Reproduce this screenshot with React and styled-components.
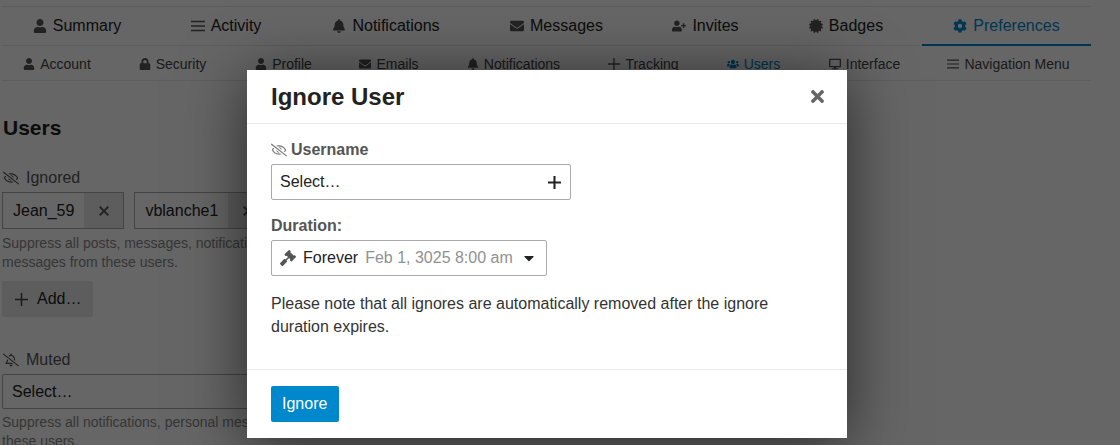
import styled, { createGlobalStyle } from 'styled-components';
import {
  FaUser, FaBell, FaEnvelope, FaUserPlus, FaCertificate, FaCog, FaLock,
  FaUsers, FaDesktop, FaRegEyeSlash, FaRegBellSlash, FaGavel, FaCaretDown, FaTimes,
} from 'react-icons/fa';

const GlobalStyle = createGlobalStyle`
  html, body {
    margin: 0;
    height: 100%;
    overflow: hidden;
    background: #fff;
    font-family: "Liberation Sans", Arial, sans-serif;
    color: #222;
  }
`;

const PlusIcon = () => (
  <svg viewBox="0 0 12 12">
    <path d="M6 0V12M0 6H12" stroke="currentColor" strokeWidth="1.4" fill="none" />
  </svg>
);

const LinesIcon = () => (
  <svg viewBox="0 0 14 12">
    <path d="M0 1.5H14M0 6H14M0 10.5H14" stroke="currentColor" strokeWidth="1.4" fill="none" />
  </svg>
);

const CrossIcon = () => (
  <svg viewBox="0 0 10 10">
    <path d="M0.7 0.7L9.3 9.3M9.3 0.7L0.7 9.3" stroke="currentColor" strokeWidth="1.9" fill="none" />
  </svg>
);

const mainTabs = [
  { label: 'Summary', icon: FaUser, width: 150 },
  { label: 'Activity', icon: LinesIcon, width: 148 },
  { label: 'Notifications', icon: FaBell, width: 172 },
  { label: 'Messages', icon: FaEnvelope, width: 169 },
  { label: 'Invites', icon: FaUserPlus, width: 129 },
  { label: 'Badges', icon: FaCertificate, width: 152 },
  { label: 'Preferences', icon: FaCog, width: 169, active: true },
];

const subTabs = [
  { label: 'Account', icon: FaUser, width: 110 },
  { label: 'Security', icon: FaLock, width: 121 },
  { label: 'Profile', icon: FaUser, width: 101 },
  { label: 'Emails', icon: FaEnvelope, width: 110 },
  { label: 'Notifications', icon: FaBell, width: 139 },
  { label: 'Tracking', icon: PlusIcon, width: 121 },
  { label: 'Users', icon: FaUsers, width: 99, active: true },
  { label: 'Interface', icon: FaDesktop, width: 123 },
  { label: 'Navigation Menu', icon: LinesIcon, width: 165 },
];

export default function App() {
  return (
    <Page>
      <GlobalStyle />
      <Content>
        <MainNav>
          {mainTabs.map(({ label, icon: Icon, width, active }) => (
            <MainTab key={label} $width={width} $active={active}>
              <Icon />
              {label}
            </MainTab>
          ))}
        </MainNav>
        <SubNav>
          {subTabs.map(({ label, icon: Icon, width, active }) => (
            <SubTab key={label} $width={width} $active={active}>
              <Icon />
              {label}
            </SubTab>
          ))}
        </SubNav>

        <Heading>Users</Heading>

        <FieldLabel>
          <FaRegEyeSlash />
          Ignored
        </FieldLabel>
        <ChipRow>
          <Chip>
            <ChipName>Jean_59</ChipName>
            <ChipClose><CrossIcon /></ChipClose>
          </Chip>
          <Chip>
            <ChipName>vblanche1</ChipName>
            <ChipClose><CrossIcon /></ChipClose>
          </Chip>
        </ChipRow>
        <Hint>
          Suppress all posts, messages, notifications, personal<br />
          messages from these users.
        </Hint>
        <AddButton>
          <PlusIcon />
          Add…
        </AddButton>

        <MutedLabel>
          <FaRegBellSlash />
          Muted
        </MutedLabel>
        <WideSelect>Select…</WideSelect>
        <MutedHint>
          Suppress all notifications, personal messages from<br />
          these users.
        </MutedHint>
      </Content>

      <Overlay />
      <Modal>
        <ModalHeader>
          <ModalTitle>Ignore User</ModalTitle>
          <CloseButton><FaTimes /></CloseButton>
        </ModalHeader>
        <ModalBody>
          <ModalLabel>
            <FaRegEyeSlash />
            Username
          </ModalLabel>
          <UserSelect>
            Select…
            <PlusIcon />
          </UserSelect>
          <ModalLabel>Duration:</ModalLabel>
          <DurationSelect>
            <FaGavel />
            <DurationName>Forever</DurationName>
            <DurationDate>Feb 1, 3025 8:00 am</DurationDate>
            <FaCaretDown />
          </DurationSelect>
          <Note>Please note that all ignores are automatically removed after the ignore duration expires.</Note>
        </ModalBody>
        <ModalFooter>
          <PrimaryButton>Ignore</PrimaryButton>
        </ModalFooter>
      </Modal>
    </Page>
  );
}

const Page = styled.div`
  position: relative;
  width: 1120px;
  height: 445px;
  overflow: hidden;
`;

const Content = styled.div`
  width: 1089px;
  margin-left: 2px;
  padding-top: 6px;
`;

const MainNav = styled.nav`
  display: flex;
  height: 38px;
  border-top: 1px solid #e9e9e9;
  border-bottom: 1px solid #e9e9e9;
`;

const MainTab = styled.a`
  flex: 0 0 ${p => p.$width}px;
  display: flex;
  align-items: center;
  justify-content: center;
  gap: 6px;
  font-size: 16px;
  color: ${p => (p.$active ? '#08c' : '#222')};
  border-bottom: 2px solid ${p => (p.$active ? '#08c' : 'transparent')};
  margin-bottom: -1px;

  svg {
    width: 14px;
    height: 14px;
    color: ${p => (p.$active ? '#08c' : '#555')};
  }
`;

const SubNav = styled.nav`
  display: flex;
  height: 34px;
  border-bottom: 1px solid #e9e9e9;
`;

const SubTab = styled.a`
  flex: 0 0 ${p => p.$width}px;
  display: flex;
  align-items: center;
  justify-content: center;
  gap: 5px;
  padding-top: 1px;
  font-size: 14px;
  color: ${p => (p.$active ? '#08c' : '#444')};

  svg {
    width: 12px;
    height: 12px;
    color: ${p => (p.$active ? '#08c' : '#555')};
  }
`;

const Heading = styled.h2`
  margin: 35px 0 0 1px;
  font-size: 21px;
  line-height: 24px;
  font-weight: 700;
  color: #222;
`;

const FieldLabel = styled.div`
  display: flex;
  align-items: center;
  gap: 7px;
  margin: 29px 0 0 1px;
  font-size: 16px;
  line-height: 18px;
  color: #555;

  svg {
    width: 16px;
    height: 14px;
  }
`;

const MutedLabel = styled(FieldLabel)`
  margin-top: 34px;
`;

const ChipRow = styled.div`
  display: flex;
  gap: 10px;
  margin-top: 5px;
`;

const Chip = styled.div`
  display: flex;
  height: 37px;
  border: 1px solid #aaa;
  box-sizing: border-box;
  font-size: 16px;
`;

const ChipName = styled.span`
  display: flex;
  align-items: center;
  padding: 0 10px;
`;

const ChipClose = styled.span`
  display: flex;
  align-items: center;
  justify-content: center;
  width: 39px;
  background: #e9e9e9;
  color: #555;

  svg {
    width: 10px;
    height: 10px;
  }
`;

const Hint = styled.p`
  margin: 5px 0 0;
  font-size: 14px;
  line-height: 19px;
  color: #888;
`;

const MutedHint = styled(Hint)`
  margin-top: 4px;
`;

const AddButton = styled.div`
  display: inline-flex;
  align-items: center;
  gap: 9px;
  height: 36px;
  margin-top: 9px;
  padding: 0 12px 0 13px;
  border-radius: 2px;
  background: #e9e9e9;
  font-size: 16px;
  color: #222;

  svg {
    width: 13px;
    height: 13px;
    color: #444;
  }
`;

const WideSelect = styled.div`
  display: flex;
  align-items: center;
  height: 35px;
  margin-top: 5px;
  padding: 0 9px;
  box-sizing: border-box;
  width: 400px;
  border: 1px solid #aaa;
  border-radius: 2px;
  font-size: 16px;
`;

const Overlay = styled.div`
  position: absolute;
  inset: 0;
  background: rgba(0, 0, 0, 0.6);
`;

const Modal = styled.div`
  position: absolute;
  left: 247px;
  top: 70px;
  width: 600px;
  height: 368px;
  display: flex;
  flex-direction: column;
  background: #fff;
  box-shadow: 0 8px 60px rgba(0, 0, 0, 0.6);
`;

const ModalHeader = styled.div`
  display: flex;
  align-items: center;
  justify-content: space-between;
  height: 53px;
  padding: 0 20px 0 24px;
  border-bottom: 1px solid #e9e9e9;
`;

const ModalTitle = styled.h3`
  margin: 0;
  font-size: 24px;
  font-weight: 700;
  color: #222;
`;

const CloseButton = styled.span`
  display: flex;
  color: #666;

  svg {
    width: 19px;
    height: 19px;
  }
`;

const ModalBody = styled.div`
  flex: 1;
  padding: 16px 24px 0;
`;

const ModalLabel = styled.div`
  display: flex;
  align-items: center;
  gap: 4px;
  font-size: 16px;
  line-height: 20px;
  font-weight: 700;
  color: #555;
  margin-bottom: 4px;

  svg {
    width: 16px;
    height: 14px;
    color: #777;
  }
`;

const UserSelect = styled.div`
  display: flex;
  align-items: center;
  justify-content: space-between;
  width: 300px;
  height: 36px;
  margin-bottom: 16px;
  padding: 0 9px 0 8px;
  box-sizing: border-box;
  border: 1px solid #aaa;
  border-radius: 2px;
  font-size: 16px;
  color: #222;

  svg {
    width: 13px;
    height: 13px;
    color: #222;
  }

  path {
    stroke-width: 1.9;
  }
`;

const DurationSelect = styled.div`
  display: flex;
  align-items: center;
  width: 276px;
  height: 36px;
  padding: 0 9px 0 8px;
  box-sizing: border-box;
  border: 1px solid #aaa;
  border-radius: 2px;
  font-size: 16px;

  svg:first-child {
    width: 16px;
    height: 16px;
    color: #555;
    margin-right: 7px;
  }

  svg:last-child {
    width: 16px;
    height: 16px;
    margin-left: auto;
    color: #222;
  }
`;

const DurationName = styled.span`
  color: #222;
  margin-right: 7px;
`;

const DurationDate = styled.span`
  color: #919191;
`;

const Note = styled.p`
  margin: 16px 0 0;
  width: 530px;
  font-size: 16px;
  line-height: 23px;
  color: #333;
`;

const ModalFooter = styled.div`
  height: 69px;
  padding: 16px 24px 0;
  box-sizing: border-box;
  border-top: 1px solid #e9e9e9;
`;

const PrimaryButton = styled.div`
  display: inline-flex;
  align-items: center;
  height: 36px;
  padding: 0 12px 0 11px;
  border-radius: 2px;
  background: #08c;
  color: #fff;
  font-size: 16px;
`;
